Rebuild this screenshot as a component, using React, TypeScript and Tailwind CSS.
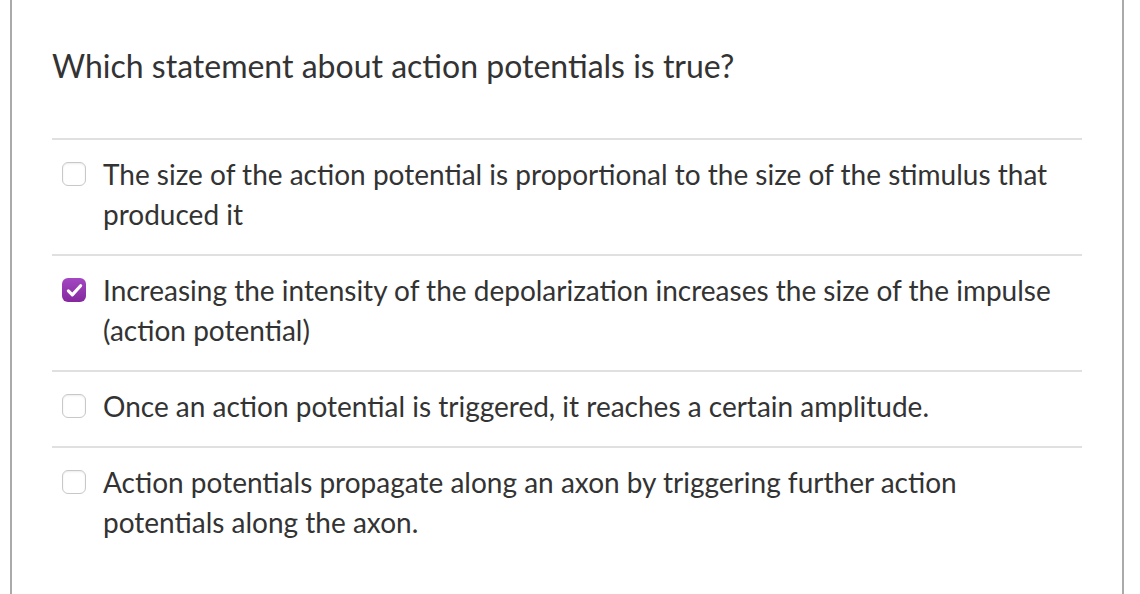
import React, { useState } from 'react';

const options = [
  'The size of the action potential is proportional to the size of the stimulus that produced it',
  'Increasing the intensity of the depolarization increases the size of the impulse (action potential)',
  'Once an action potential is triggered, it reaches a certain amplitude.',
  'Action potentials propagate along an axon by triggering further action potentials along the axon.',
];

export default function App() {
  const [checked, setChecked] = useState<boolean[]>([false, true, false, false]);

  const toggle = (i: number) =>
    setChecked((prev) => prev.map((v, j) => (j === i ? !v : v)));

  return (
    <div
      className="min-h-[594px] bg-white text-[#333]"
      style={{ fontFamily: 'Lato, "Open Sans", sans-serif' }}
    >
      <div className="ml-[10px] w-[1114px] min-h-[594px] border-x-2 border-[#aaa] px-10 pt-[43px]">
        <h1 className="text-[32px] leading-[46px] font-normal mb-[49px]">
          Which statement about action potentials is true?
        </h1>

        <div>
          {options.map((text, i) => (
            <Option
              key={i}
              text={text}
              checked={checked[i]}
              onChange={() => toggle(i)}
            />
          ))}
        </div>
      </div>
    </div>
  );
}

function Option({
  text,
  checked,
  onChange,
}: {
  text: string;
  checked: boolean;
  onChange: () => void;
}) {
  return (
    <label className="flex items-start border-t-2 border-[#e0e0e0] pt-[14px] pb-5 cursor-pointer">
      <span className="h-10 flex items-center ml-[10px] mr-[17px] shrink-0">
        <button
          type="button"
          onClick={onChange}
          className={`w-6 h-6 rounded-[6px] flex items-center justify-center ${
            checked
              ? 'bg-gradient-to-b from-[#a347c2] to-[#85289f]'
              : 'bg-white border border-[#c8c8c8] shadow-[inset_0_1px_2px_rgba(0,0,0,0.08)]'
          }`}
        >
          {checked && (
            <svg viewBox="0 0 24 24" className="w-[21px] h-[21px]" fill="none">
              <path
                d="M5 12.5l4.5 4.5L19 6.5"
                stroke="white"
                strokeWidth="3.6"
                strokeLinecap="round"
                strokeLinejoin="round"
              />
            </svg>
          )}
        </button>
      </span>
      <span className="text-[28px] leading-10">{text}</span>
    </label>
  );
}
